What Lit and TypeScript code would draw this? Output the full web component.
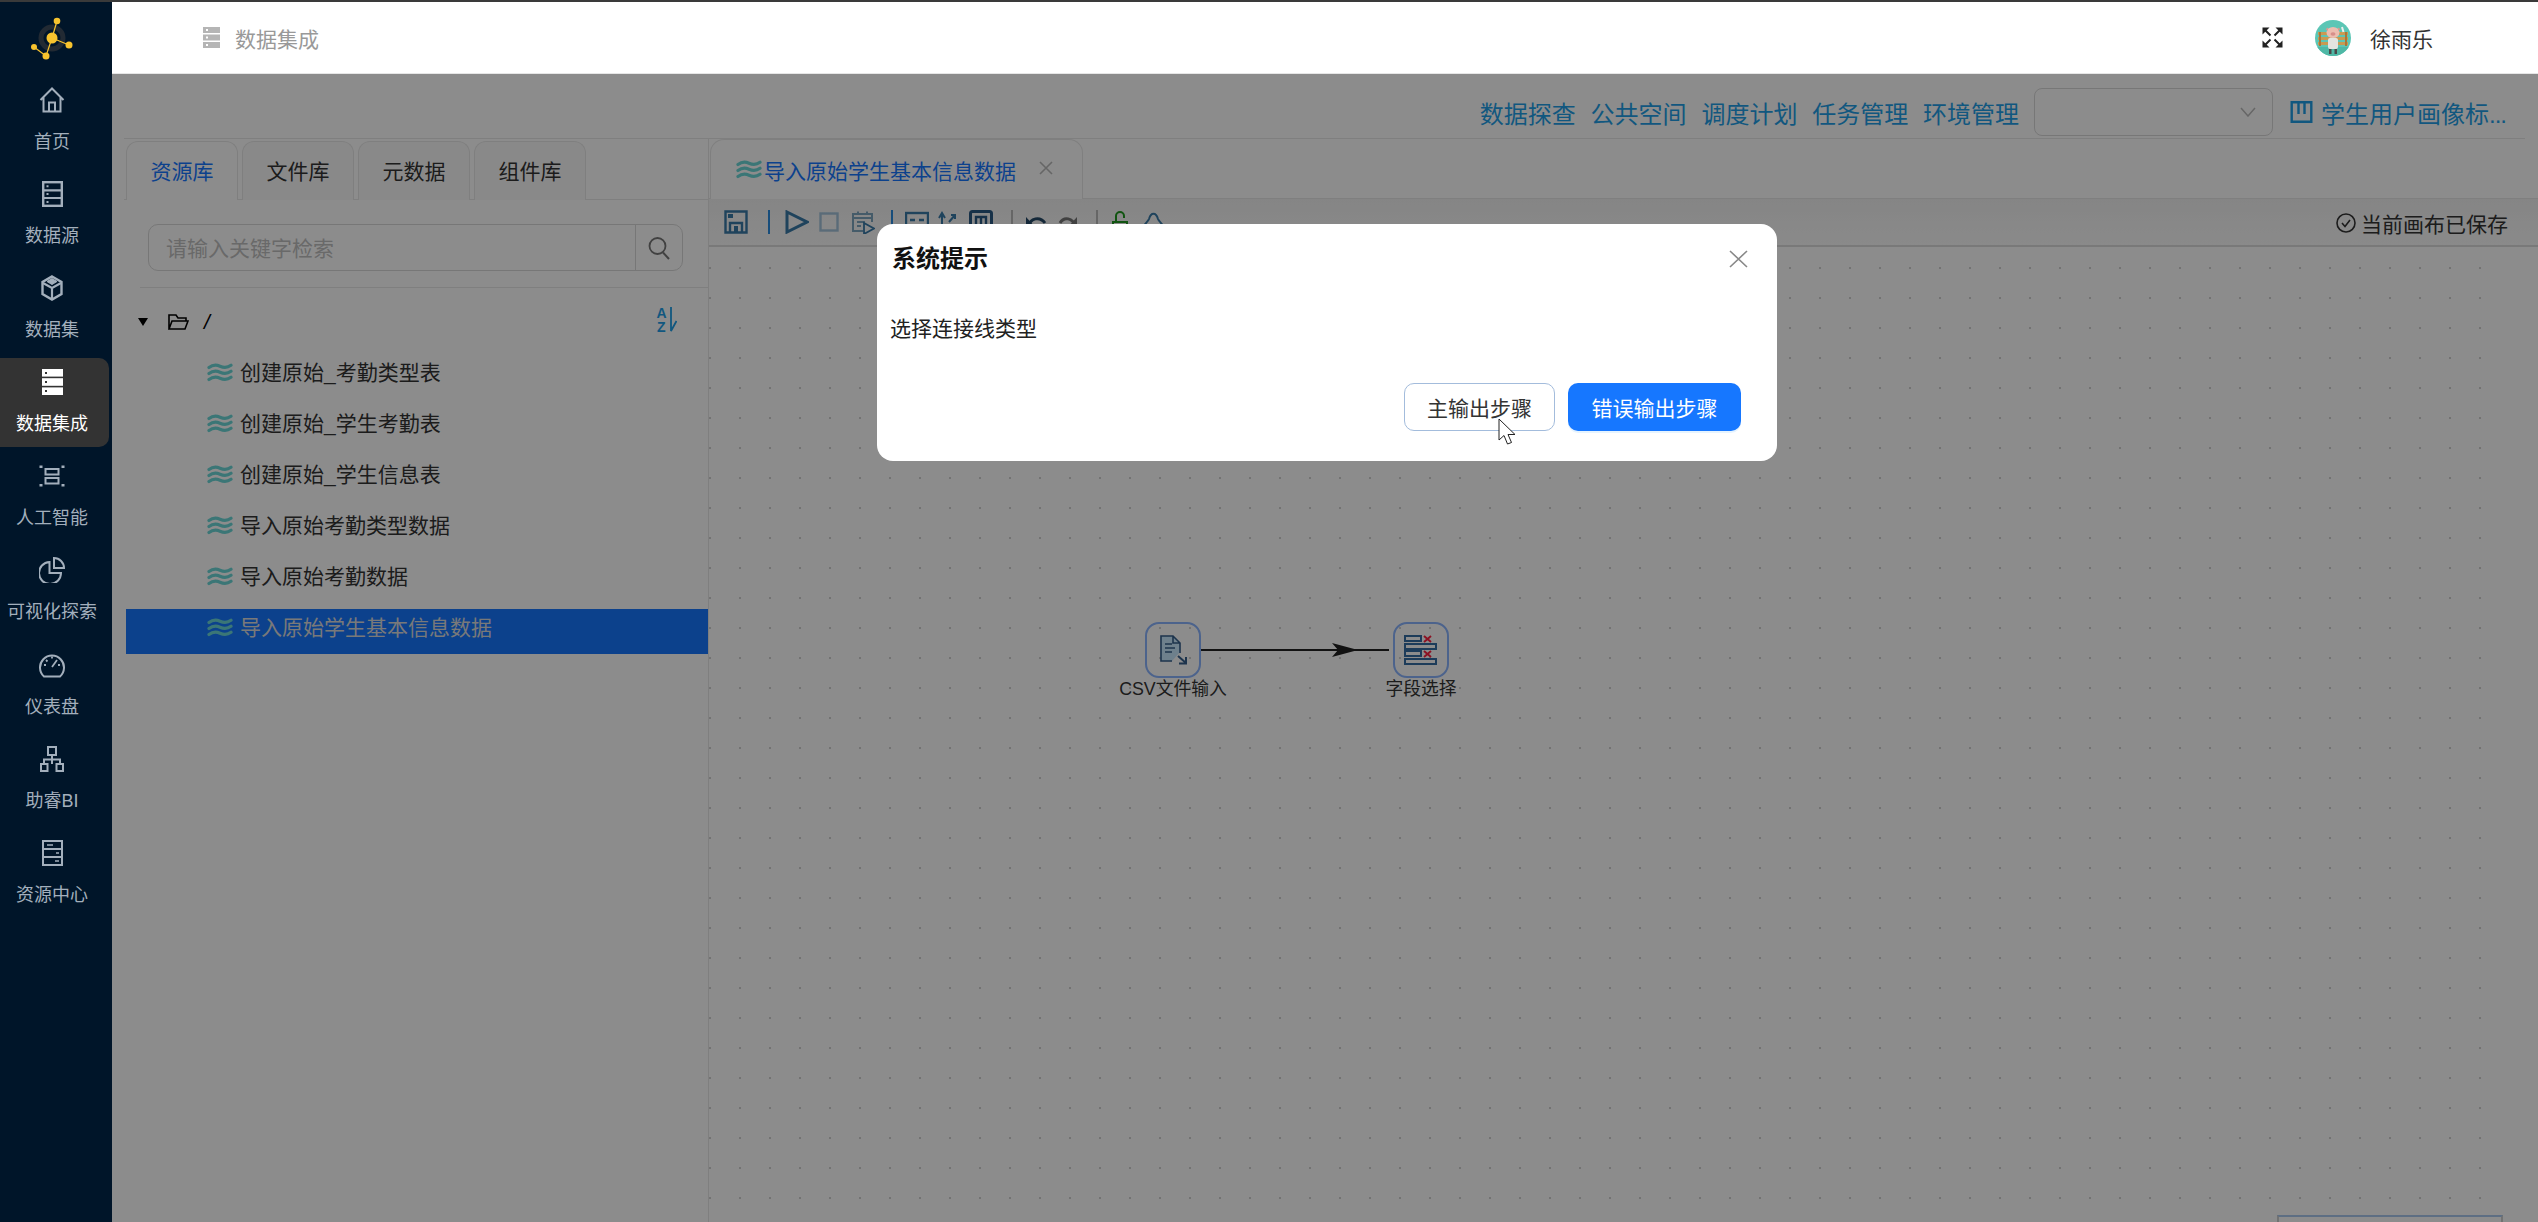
import { LitElement, html, css, svg } from "lit";
import { customElement } from "lit/decorators.js";

const s = (w: number, h: number, body: unknown, cls = "") =>
  html`<svg class=${cls} width=${w} height=${h} viewBox="0 0 ${w} ${h}" fill="none" stroke="currentColor" stroke-width="2">${body}</svg>`;

const nav = [
  { label: "首页", icon: s(26, 26, svg`<path d="M1.500 13 13 1.500 24.500 13M4.500 10.500V24.500H21.500V10.500M10 24.500V15.500H16V24.500"/>`) },
  { label: "数据源", icon: s(21, 26, svg`<rect x="1.200" y="1.200" width="18.600" height="23.600" stroke-width="2.400"/><path d="M1 9.300H20M1 17H20" stroke-width="2.200"/><path d="M4.500 5.200h2M4.500 13h2M4.500 21h2" stroke-width="2"/>`) },
  { label: "数据集", icon: s(22, 26, svg`<path d="M11 1.500 20.500 7V19L11 24.500 1.500 19V7Z" stroke-width="2.400"/><path d="M2 8 11 13 20 8M11 13V24" stroke-width="2.200"/><path d="M6 6.500 11 3.500 16 6.500 11 9.500Z" fill="currentColor" stroke-width="1"/>`) },
  { label: "数据集成", active: true, icon: s(21, 26, svg`<g fill="#fff" stroke="none"><rect width="21" height="7.600"/><rect y="9.200" width="21" height="7.600"/><rect y="18.400" width="21" height="7.600"/></g><g fill="#333" stroke="none"><rect x="3" y="3" width="2" height="2"/><rect x="3" y="12" width="2" height="2"/><rect x="3" y="21" width="2" height="2"/></g>`) },
  { label: "人工智能", icon: s(26, 26, svg`<rect x="6.500" y="6" width="13" height="5.500" stroke-width="2"/><rect x="6.500" y="15" width="13" height="5.500" stroke-width="2"/><path d="M2 5V2.500M24 5V2.500M2 21v2.500M24 21v2.500" stroke-width="3"/>`) },
  { label: "可视化探索", icon: s(26, 26, svg`<path d="M10.500 5A11 11 0 1 0 22 16H10.500Z"/><path d="M15 1A10 10 0 0 1 25 11H15Z"/>`) },
  { label: "仪表盘", icon: s(26, 26, svg`<path d="M5 24.500A12 12 0 1 1 21 24.500Z"/><path d="M13 15 18 8M13 4.500V6.500M5 13h2M21 13h-2M7 8l1.500 1.500" stroke-width="1.800"/>`) },
  { label: "助睿BI", icon: s(24, 26, svg`<rect x="8" y="1" width="8" height="8"/><path d="M12 9V18M4 18V13.500H20V18"/><rect x="1" y="18" width="6.500" height="7"/><rect x="16.500" y="18" width="6.500" height="7"/>`) },
  { label: "资源中心", icon: s(21, 26, svg`<rect x="1" y="1" width="19" height="24"/><path d="M1 9H20M1 17H20"/><path d="M5 5h6M14 13h3M13 21h4" stroke-width="1.600"/>`) },
];

const wave = s(26, 20, svg`<g stroke-width="3.200" stroke-linecap="round"><path d="M2 5.500C6 2.500 9 2.500 13 4.200S20 6.200 24 3.200"/><path d="M2 11.500C6 8.500 9 8.500 13 10.200S20 12.200 24 9.200"/><path d="M2 17.500C6 14.500 9 14.500 13 16.200S20 18.200 24 15.200"/></g>`, "wave");

const dark = "#3a7aa8";
const tools: { ml: number; icon?: unknown; sep?: boolean; g?: boolean }[] = [
  { ml: 15, icon: s(24, 24, svg`<path d="M1.500 1.500H22.500V22.500H1.500Z" stroke=${dark} stroke-width="2.400"/><rect x="4" y="4" width="5" height="4" fill=${dark} stroke="none"/><path d="M6 22V13H18V22" stroke=${dark} stroke-width="2.400"/><rect x="10" y="16" width="4" height="6" fill=${dark} stroke="none"/>`) },
  { ml: 20, sep: true },
  { ml: 14.5, icon: s(24, 24, svg`<path d="M2 2 22 12 2 22Z" stroke=${dark} stroke-width="3"/>`) },
  { ml: 10, icon: s(20, 20, svg`<rect x="1.500" y="1.500" width="17" height="17" stroke="#a4c4da" stroke-width="2.400"/>`) },
  { ml: 12, icon: s(24, 24, svg`<path d="M21 12V4H2V21H12" stroke="#7fa6c0" stroke-width="2"/><path d="M2 8H21M7 1.500V5M16 1.500V5M6 12h8M6 16h4" stroke="#7fa6c0" stroke-width="2"/><path d="M13 13 23 18.500 13 24Z" stroke=${dark} stroke-width="1.800"/>`) },
  { ml: 16, sep: true },
  { ml: 12, icon: s(24, 24, svg`<rect x="1" y="3" width="22" height="14" stroke=${dark} stroke-width="2.400"/><path d="M5 10H10M14 10H19" stroke=${dark} stroke-width="2.400"/>`) },
  { ml: 8, icon: s(19, 24, svg`<path d="M5 20V4M2 8 5 3 8 8M12 12 18 5M14 5H18V9" stroke=${dark} stroke-width="2"/>`) },
  { ml: 13, icon: s(24, 24, svg`<rect x="1.500" y="1.500" width="21" height="21" rx="2" stroke="#2a5a84" stroke-width="3"/><path d="M7 20V7H17V20M12 7V20" stroke="#2a5a84" stroke-width="2.400"/>`) },
  { ml: 18, sep: true, g: true },
  { ml: 12, icon: s(22, 24, svg`<path d="M4 16C5 8 15 6 20 13" stroke="#264a68" stroke-width="3"/><path d="M1 7V18H11Z" fill="#264a68" stroke="none"/>`) },
  { ml: 11.500, icon: s(20, 24, svg`<path d="M17 16C15 8 6 6 2 13" stroke="#777" stroke-width="3"/><path d="M19 7V18H9Z" fill="#777" stroke="none"/>`) },
  { ml: 18, sep: true, g: true },
  { ml: 14, icon: s(16, 24, svg`<path d="M4 12V6A4 4 0 0 1 12 6V8M1 12H15V24H1Z" stroke="#1f9a1f" stroke-width="2"/>`) },
  { ml: 13, icon: s(25, 24, svg`<path d="M2 20C2 14 7 12 8 9 10 2 15 2 17 9 18 12 23 14 23 20Z" stroke=${dark} stroke-width="2"/>`) },
];

const tree = ["创建原始_考勤类型表", "创建原始_学生考勤表", "创建原始_学生信息表", "导入原始考勤类型数据", "导入原始考勤数据", "导入原始学生基本信息数据"];

@customElement("app-root")
export class AppRoot extends LitElement {
  static styles = css`
    :host { display: block; width: 2538px; height: 1222px; overflow: hidden; position: relative;
      font-family: "Liberation Sans", "Noto Sans CJK SC", sans-serif; font-size: 21px; color: #333; background: #fff; }
    * { box-sizing: border-box; }
    svg { display: block; flex: none; }
    .strip { height: 2px; background: #3a3a3a; }
    .frame { display: flex; height: 1220px; }
    .side { width: 112px; flex: none; background: #001529; color: #a3afbc; }
    .logo { display: block; }
    .item { width: 109px; height: 89px; margin-bottom: 5.1px; padding: 11px 5px 0 0; display: flex; flex-direction: column; align-items: center; font-size: 18px; }
    .item .ic { height: 26px; display: flex; align-items: center; }
    .item .lb { margin-top: 17px; line-height: 24px; white-space: nowrap; }
    .item.on { background: #333; border-radius: 0 10px 10px 0; color: #fff; }
    .main { flex: 1; min-width: 0; display: flex; flex-direction: column; }
    .head { height: 72px; flex: none; border-bottom: 1px solid #e6e6e6; display: flex; align-items: center; padding: 0 105px 0 91px; }
    .crumb { display: flex; align-items: center; gap: 15px; color: #999; }
    .crumb svg { color: #b5b5b5; }
    .right { margin-left: auto; display: flex; align-items: center; }
    .expand { color: #222; margin-right: 32px; }
    .name { margin-left: 19px; }
    .body { flex: 1; min-height: 0; position: relative; display: flex; flex-direction: column; overflow: hidden; }
    .bar { height: 65px; flex: none; margin: 0 13px 0 12px; padding: 14px 19px 2px 0; border-bottom: 1px solid #e8e8e8; display: flex; justify-content: flex-end; align-items: center; font-size: 24px; color: #1f9fe8; gap: 14.8px; white-space: nowrap; }
    .select { width: 239px; height: 48px; margin: 0 16px 0 0.2px; border: 1px solid #d9d9d9; border-radius: 8px; display: flex; align-items: center; justify-content: flex-end; padding-right: 16px; color: #bbb; }
    .prof { display: flex; align-items: center; gap: 8px; margin-left: -14.8px; }
    .dots3 { letter-spacing: -1px; }
    .cols { flex: 1; min-height: 0; display: flex; }
    .left { width: 585px; margin-left: 12px; flex: none; border-right: 1px solid #e8e8e8; }
    .ltabs { height: 61px; padding: 2px 0 0 2px; display: flex; gap: 4px; border-bottom: 1px solid #e8e8e8; }
    .ltab { width: 112px; height: 59px; border: 1px solid #e8e8e8; border-bottom: none; border-radius: 12px 12px 0 0; background: #fafafa; display: flex; align-items: center; justify-content: center; padding-bottom: 3px; }
    .ltab.on { background: #fff; color: #1677ff; }
    .search { margin: 24px 0 0 24px; width: 535px; height: 47px; border: 1px solid #d9d9d9; border-radius: 10px; display: flex; align-items: center; }
    .search .ph { flex: 1; padding: 0 0 1px 17px; color: #bfbfbf; }
    .search .go { width: 47px; height: 47px; border-left: 1px solid #d9d9d9; display: flex; align-items: center; justify-content: center; color: #777; }
    .hr { height: 1px; margin: 16px 0 0 16px; background: #e8e8e8; }
    .root { height: 66px; margin-left: 2px; padding: 2px 31px 0 12px; display: flex; align-items: center; color: #000; }
    .root .tri { margin-right: 20px; }
    .root .slash { margin-left: 15px; font-style: italic; }
    .root .sort { margin-left: auto; color: #1f9fe8; margin-bottom: 4px; }
    .row { height: 45px; margin: 0 0 6px 2px; padding: 0 0 7px 81px; display: flex; align-items: center; gap: 7px; line-height: 38px; white-space: nowrap; color: #333; }
    .row .wave { color: #6cd8d8; flex: none; margin-bottom: 3px; }
    .row.on { background: #1677ff; color: #ddd; }
    .rcol { flex: 1; min-width: 0; display: flex; flex-direction: column; }
    .rtabs { height: 60px; flex: none; padding-left: 1px; border-bottom: 1px solid #e8e8e8; display: flex; }
    .rtab { width: 373px; height: 60px; border: 1px solid #e8e8e8; border-bottom: none; border-radius: 14px 14px 0 0; background: #fff; display: flex; align-items: center; padding-left: 25px; gap: 2px; color: #1677ff; white-space: nowrap; }
    .rtab .wave { color: #6cd8d8; margin-bottom: 2px; }
    .rtab .x { margin-left: 21px; color: #bbb; margin-bottom: 4px; }
    .tools { height: 48px; flex: none; background: linear-gradient(#f3f3f3, #fbfbfb); border-bottom: 2px solid #dcdcdc; display: flex; align-items: center; padding-right: 30px; }
    .tools .sep { width: 2px; height: 24px; background: #2a8ce0; }
    .tools .sep.g { background: #bbb; }
    .saved { margin-left: auto; margin-top: 1px; display: flex; align-items: center; gap: 5px; color: #333; }
    .canvas { flex: 1; min-height: 0; position: relative; }
    .dots { height: 100%; margin-right: 43px; position: relative;
      background-image: radial-gradient(circle, #d2d2d2 1.1px, transparent 1.4px); background-size: 30px 30px; background-position: -14px 6px; }
    .node { position: absolute; width: 120px; display: flex; flex-direction: column; align-items: center; font-size: 17.8px; white-space: nowrap; color: #333; line-height: 22px; }
    .node.a { left: 404px; top: 375px; }
    .node.b { left: 652px; top: 375px; }
    .nbox { width: 56px; height: 56px; border: 2px solid #8ab4ff; border-radius: 14px; display: flex; align-items: center; justify-content: center; }
    .edge { position: absolute; left: 492px; top: 395px; }
    .mini { position: absolute; right: 35px; top: 968px; width: 226px; height: 40px; border: 2px solid #d0d0d0; border-top-color: #a9c8ee; }
    .mask { position: absolute; inset: 0; background: rgba(0, 0, 0, 0.45); display: flex; justify-content: center; padding: 150px 0 0 4px; }
    .dlg { width: 900px; height: 237px; background: #fff; border-radius: 16px; position: relative; }
    .dh { height: 64px; display: flex; align-items: center; justify-content: space-between; padding: 0 29px 0 15px; }
    .dh b { font-size: 24px; font-weight: 700; color: #111; }
    .dh svg { color: #888; margin-top: 6px; }
    .db { margin-top: 23px; padding-left: 13px; line-height: 36px; color: #222; }
    .df { margin-top: 36px; padding-right: 36px; display: flex; justify-content: flex-end; gap: 13px; }
    .btn { height: 48px; border-radius: 10px; display: flex; align-items: center; justify-content: center; }
    .btn.o { width: 151px; border: 1px solid #a3bcdc; color: #333; }
    .btn.p { width: 173px; background: #1677ff; color: #fff; box-shadow: 0 2px 0 rgba(5, 145, 255, 0.1); }
    .cursor { position: absolute; left: 621px; top: 194px; }
  `;

  render() {
    return html`
      <div class="strip"></div>
      <div class="frame">
        <aside class="side">
          <svg class="logo" width="112" height="74" viewBox="0 2 112 74" fill="none">
            <circle cx="52" cy="38" r="11" stroke="#222a33" stroke-width="5"/>
            <path d="M52 38 57 21M52 38 69 45M52 38 46 56 34 47" stroke="#f7c32e" stroke-width="1.200"/>
            <g fill="#f7c32e"><circle cx="52" cy="38" r="5.500"/><circle cx="57" cy="21" r="3.300"/><circle cx="69" cy="45" r="3.500"/><circle cx="46" cy="56" r="3.500"/><circle cx="34" cy="47" r="3"/></g>
          </svg>
          ${nav.map((n) => html`<div class="item ${n.active ? "on" : ""}"><div class="ic">${n.icon}</div><div class="lb">${n.label}</div></div>`)}
        </aside>
        <div class="main">
          <header class="head">
            <div class="crumb">
              ${s(17, 21, svg`<g fill="currentColor" stroke="none"><rect width="17" height="6"/><rect y="7.500" width="17" height="6"/><rect y="15" width="17" height="6"/></g><g fill="#fff" stroke="none"><rect x="3" y="2" width="2" height="2"/><rect x="3" y="9.500" width="2" height="2"/><rect x="3" y="17" width="2" height="2"/></g>`)}
              <span>数据集成</span>
            </div>
            <div class="right">
              ${s(21, 21, svg`<g fill="currentColor" stroke="none"><path d="M0.500 0.500H7.500L0.500 7.500Z"/><path d="M20.500 0.500H13.500L20.500 7.500Z"/><path d="M0.500 20.500H7.500L0.500 13.500Z"/><path d="M20.500 20.500H13.500L20.500 13.500Z"/></g><path d="M3 3 8.500 8.500M18 3 12.500 8.500M3 18 8.500 12.500M18 18 12.500 12.500" stroke-width="2"/>`, "expand")}
              <svg width="36" height="36" viewBox="0 0 36 36">
                <defs><clipPath id="av"><circle cx="18" cy="18" r="18"/></clipPath></defs>
                <g clip-path="url(#av)">
                  <rect width="36" height="36" fill="#5cc6b5"/>
                  <path d="M3 12h30v3H3zM3 17h30v3H3zM3 22h30v3H3z" fill="#c99a52"/>
                  <path d="M4 12v14h2V12zM30 12v14h2V12z" fill="#a8763a"/>
                  <rect y="27" width="36" height="9" fill="#4fb8a6"/>
                  <rect x="13" y="18" width="10" height="11" rx="2" fill="#e4e4e0"/>
                  <path d="M14 29h2.500v5H14zM19.500 29h2.500v5H19.500z" fill="#4a4a4a"/>
                  <ellipse cx="18" cy="12.500" rx="6.500" ry="5.500" fill="#ecbdb0"/>
                  <ellipse cx="18" cy="14" rx="2.500" ry="1.700" fill="#d78f8a"/>
                  <path d="M10.500 9 13 7.500 13 11ZM25.500 9 23 7.500 23 11Z" fill="#d99a90"/>
                  <path d="M27 7l1.500 5" stroke="#eee" stroke-width="2"/>
                </g>
              </svg>
              <span class="name">徐雨乐</span>
            </div>
          </header>
          <div class="body">
            <div class="bar">
              <span>数据探查</span><span>公共空间</span><span>调度计划</span><span>任务管理</span><span>环境管理</span>
              <div class="select">${s(16, 10, svg`<path d="M1 1 8 9 15 1" stroke-width="1.500"/>`)}</div>
              <div class="prof">
                ${s(24, 22, svg`<path d="M2.700 1.200H22.300V20.800H2.700Z M9.500 1.500V13M15.500 1.500V13" stroke-width="2.400"/>`)}
                <span>学生用户画像标<span class="dots3">...</span></span>
              </div>
            </div>
            <div class="cols">
              <section class="left">
                <div class="ltabs">
                  <div class="ltab on">资源库</div><div class="ltab">文件库</div><div class="ltab">元数据</div><div class="ltab">组件库</div>
                </div>
                <div class="search">
                  <div class="ph">请输入关键字检索</div>
                  <div class="go">${s(22, 24, svg`<circle cx="9.500" cy="10" r="8" stroke-width="1.800"/><path d="M15 16.500 21 23" stroke-width="2"/>`)}</div>
                </div>
                <div class="hr"></div>
                <div class="root">
                  ${s(10, 8, svg`<path d="M0 0H10L5 8Z" fill="#000" stroke="none"/>`, "tri")}
                  ${s(21, 16, svg`<path d="M1 15V1H8L10 4H18V7M1 15H17L20 7H4Z" stroke-width="1.600"/>`)}
                  <span class="slash">/</span>
                  ${s(21, 32, svg`<text x="0.500" y="14" font-size="14" font-weight="700" fill="currentColor" stroke="none" font-family="Liberation Sans">A</text><text x="1" y="27.500" font-size="14" font-weight="700" fill="currentColor" stroke="none" font-family="Liberation Sans">Z</text><path d="M15 3V27L20.500 17" stroke-width="1.800"/>`, "sort")}
                </div>
                ${tree.map((t, i) => html`<div class="row ${i === 5 ? "on" : ""}">${wave}<span>${t}</span></div>`)}
              </section>
              <section class="rcol">
                <div class="rtabs">
                  <div class="rtab">${wave}<span>导入原始学生基本信息数据</span>${s(14, 14, svg`<path d="M1 1 13 13M13 1 1 13" stroke-width="1.600"/>`, "x")}</div>
                </div>
                <div class="tools">
                  ${tools.map((t) =>
                    t.sep
                      ? html`<div class="sep ${t.g ? "g" : ""}" style="margin-left:${t.ml}px"></div>`
                      : html`<div style="margin-left:${t.ml}px">${t.icon}</div>`
                  )}
                  <div class="saved">
                    ${s(20, 20, svg`<circle cx="10" cy="10" r="9" stroke-width="1.600"/><path d="M6 10 9 13.500 14 7" stroke-width="1.600"/>`)}
                    <span>当前画布已保存</span>
                  </div>
                </div>
                <div class="canvas">
                  <div class="dots">
                    <svg class="edge" width="190" height="16" viewBox="0 0 190 16" fill="none">
                      <path d="M0 8H188" stroke="#222" stroke-width="2"/>
                      <path d="M131 1 157 8 131 15 137 8Z" fill="#222"/>
                    </svg>
                    <div class="node a">
                      <div class="nbox">
                        <svg width="28" height="30" viewBox="0 0 28 30" fill="none">
                          <path d="M2 1H14L21 8V17L13 26H2Z" fill="#c9e9ff" stroke="none"/>
                          <path d="M13 26H2V1H14L21 8V18M14 1V8H21M6 9H13M6 13H16M6 17H13" stroke="#355f8c" stroke-width="1.600"/>
                          <path d="M19 21 27 28M27 22V28.500H20" stroke="#355f8c" stroke-width="2"/>
                        </svg>
                      </div>
                      <span>CSV文件输入</span>
                    </div>
                    <div class="node b">
                      <div class="nbox">
                        <svg width="34" height="30" viewBox="0 0 34 30" fill="none">
                          <g stroke="#356da4" stroke-width="2">
                            <rect x="1" y="1" width="16" height="5"/><rect x="1" y="9" width="31" height="5"/><rect x="1" y="16" width="16" height="5"/><rect x="1" y="24" width="31" height="5"/>
                          </g>
                          <path d="M20 1 27 7M27 1 20 7M20 16 27 22M27 16 20 22" stroke="#ff2040" stroke-width="2"/>
                        </svg>
                      </div>
                      <span>字段选择</span>
                    </div>
                  </div>
                  <div class="mini"></div>
                </div>
              </section>
            </div>
            <div class="mask">
              <div class="dlg">
                <div class="dh"><b>系统提示</b>${s(19, 18, svg`<path d="M1 1 18 17M18 1 1 17" stroke-width="1.600"/>`)}</div>
                <div class="db">选择连接线类型</div>
                <div class="df"><div class="btn o">主输出步骤</div><div class="btn p">错误输出步骤</div></div>
                <svg class="cursor" width="19" height="28" viewBox="0 0 19 28"><path d="M1 1V22L6 17.500 9.500 26 13.500 24.500 10 16.500H17Z" fill="#fff" stroke="#222" stroke-width="1"/></svg>
              </div>
            </div>
          </div>
        </div>
      </div>
    `;
  }
}
